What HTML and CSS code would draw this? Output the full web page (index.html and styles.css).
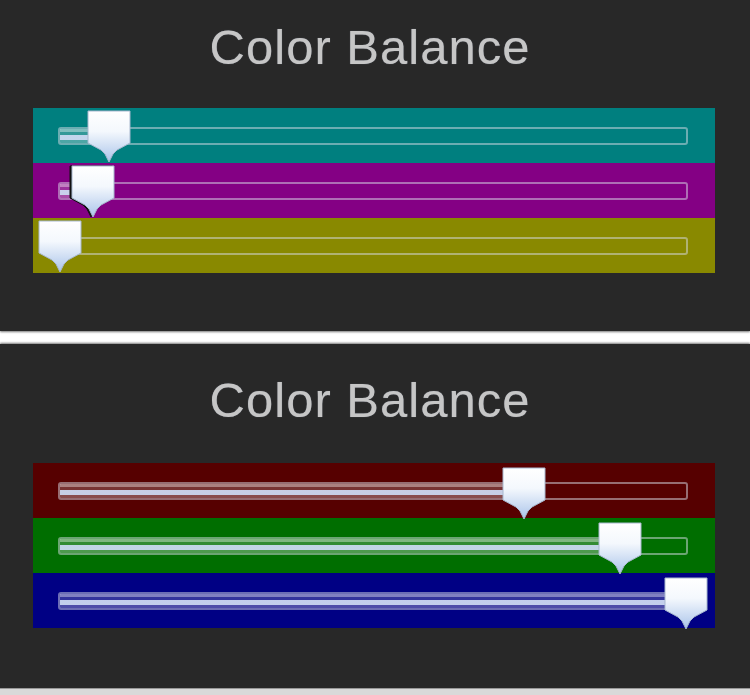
FILE: index.html
```html
<!DOCTYPE html>
<html>
  <head>
    <title>Color Balance</title>
    <meta charset="utf-8" />
    <meta name="viewport" content="width=device-width, initial-scale=1.0" />

    <link rel="stylesheet" href="styles.css">
  </head>
  <body>
    <svg width="0" height="0" class="defs">
      <defs>
        <linearGradient id="thumb-grad" x1="0" y1="0" x2="0" y2="1">
          <stop offset="0" stop-color="#ffffff" />
          <stop offset="0.4" stop-color="#f4f8fd" />
          <stop offset="1" stop-color="#aac4ea" />
        </linearGradient>
        <symbol id="thumb" viewBox="0 0 44 53">
          <path d="M1 1 H43 V33 L30 40 L26 44 L22 52 L18 44 L14 40 L1 33 Z"
            fill="url(#thumb-grad)" stroke="#a8b8cf" stroke-width="1" />
        </symbol>
      </defs>
    </svg>

    <section class="panel panel-top">
      <h2 class="title">Color Balance</h2>
      <div class="sliders">
        <div class="band band-teal">
          <div class="track">
            <div class="fill" style="width: 7.9%"></div>
            <svg class="thumb" style="left: 7.9%"><use href="#thumb" /></svg>
          </div>
        </div>
        <div class="band band-magenta">
          <div class="track">
            <div class="fill" style="width: 5.2%"></div>
            <svg class="thumb thumb-focus" style="left: 5.2%"><use href="#thumb" /></svg>
          </div>
        </div>
        <div class="band band-olive">
          <div class="track">
            <div class="fill" style="width: 0%"></div>
            <svg class="thumb" style="left: 0%"><use href="#thumb" /></svg>
          </div>
        </div>
      </div>
    </section>

    <section class="panel panel-bottom">
      <h2 class="title">Color Balance</h2>
      <div class="sliders">
        <div class="band band-red">
          <div class="track">
            <div class="fill" style="width: 74.1%"></div>
            <svg class="thumb" style="left: 74.1%"><use href="#thumb" /></svg>
          </div>
        </div>
        <div class="band band-green">
          <div class="track">
            <div class="fill" style="width: 89.4%"></div>
            <svg class="thumb" style="left: 89.4%"><use href="#thumb" /></svg>
          </div>
        </div>
        <div class="band band-blue">
          <div class="track">
            <div class="fill" style="width: 100%"></div>
            <svg class="thumb" style="left: 100%"><use href="#thumb" /></svg>
          </div>
        </div>
      </div>
    </section>

    <div class="bottom-strip"></div>
  </body>
</html>
```

FILE: styles.css
```css
body {
  margin: 0;
  background-color: #fff;
  font-family: "Liberation Sans", Arial, sans-serif;
}

.defs {
  position: absolute;
}

.panel {
  display: flex;
  flex-direction: column;
  background-color: #282828;
  padding-left: 33px;
  box-sizing: border-box;
}

.panel-top {
  height: 331px;
  padding-top: 23px;
  margin-bottom: 13px;
  box-shadow: 0 1px 2px #777;
}

.panel-bottom {
  height: 344px;
  padding-top: 32px;
  box-shadow: 0 -1px 2px #777;
}

.title {
  margin: 0 0 36px;
  width: 682px;
  padding-right: 8px;
  box-sizing: border-box;
  text-align: center;
  font-size: 49px;
  line-height: 49px;
  font-weight: normal;
  letter-spacing: 1px;
  color: #c6c6c6;
  text-shadow: 0 0 1px rgba(160, 170, 190, 0.6);
}

.panel-bottom .title {
  margin-bottom: 38px;
}

.sliders {
  display: flex;
  flex-direction: column;
  width: 682px;
}

.band {
  height: 55px;
  padding: 19px 27px 0 25px;
  box-sizing: border-box;
}

.band-teal { background-color: #007f7f; }
.band-magenta { background-color: #840084; }
.band-olive { background-color: #898900; }
.band-red { background-color: #560000; }
.band-green { background-color: #006e00; }
.band-blue { background-color: #000084; }

.track {
  position: relative;
  height: 18px;
  border: 2px solid rgba(215, 220, 230, 0.5);
  border-radius: 3px;
  box-sizing: border-box;
}

.fill {
  height: 100%;
  background: linear-gradient(
    to bottom,
    rgba(255, 255, 255, 0.5) 0 22%,
    rgba(255, 255, 255, 0.2) 22% 45%,
    rgba(205, 218, 242, 0.95) 45% 82%,
    rgba(255, 255, 255, 0.3) 82% 100%
  );
}

.thumb {
  position: absolute;
  top: -19px;
  width: 44px;
  height: 53px;
  margin-left: -22px;
}

.panel-bottom .thumb {
  top: -17px;
}

.thumb-focus {
  filter: drop-shadow(-2px 0 0 #111);
}

.bottom-strip {
  height: 7px;
  background-color: #d9d9d9;
  border-top: 1px solid #999;
}
```
